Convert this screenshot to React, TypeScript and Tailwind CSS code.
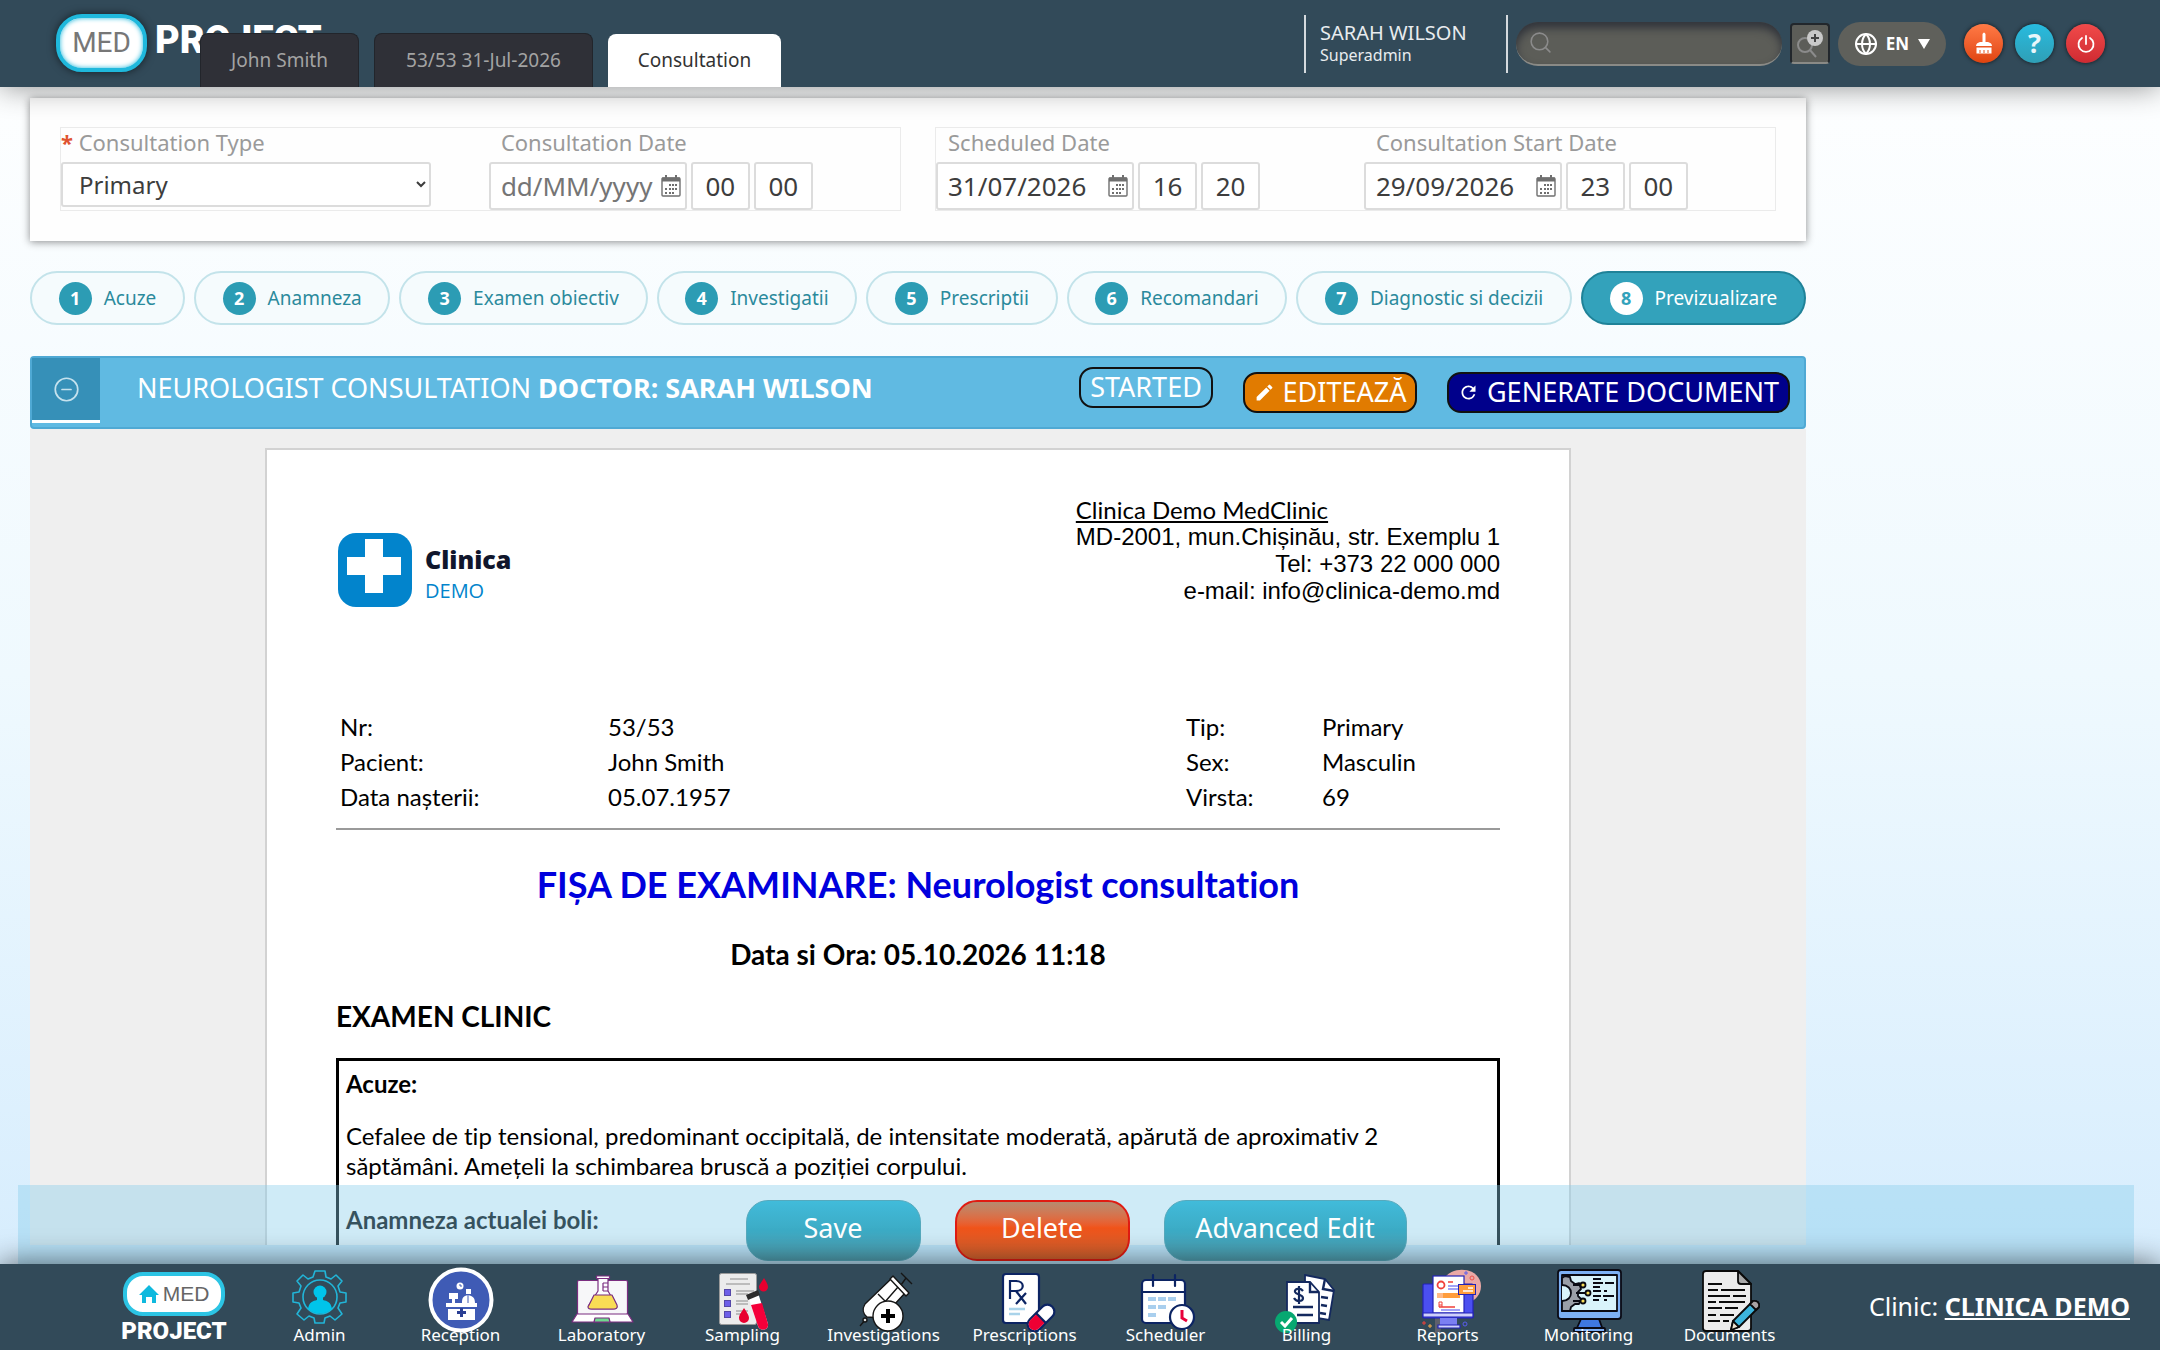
import type { ReactNode } from 'react';
import { CircleMinus, Globe, Search } from 'lucide-react';
import { MdEdit, MdRefresh } from 'react-icons/md';

const steps = [
  'Acuze',
  'Anamneza',
  'Examen obiectiv',
  'Investigatii',
  'Prescriptii',
  'Recomandari',
  'Diagnostic si decizii',
  'Previzualizare',
];

const AdminIcon = () => (
  <svg viewBox="0 0 66 66" className="h-[66px] w-[66px]" fill="none" stroke="#22b5d8" strokeWidth="1.6" strokeLinejoin="round">
    <path d="M28 4h10l1 6 5 2 5-4 6 6-4 5 2 6 6 1v9l-6 1-2 5 4 6-7 6-5-4-5 2-1 5H28l-1-5-5-2-5 4-7-6 4-6-2-5-6-1v-9l6-1 2-6-4-5 6-6 5 4 5-2z" />
    <circle cx="33" cy="30" r="17" />
    <circle cx="33" cy="25" r="6.5" fill="#00c4ea" stroke="none" />
    <path d="M21 42c1-7 5-8 9-9v-4h6v4c4 1 8 2 9 9-7 6-17 6-24 0z" fill="#00c4ea" stroke="none" />
  </svg>
);

const ReceptionIcon = () => (
  <svg viewBox="0 0 66 66" className="h-[66px] w-[66px]">
    <circle cx="33" cy="33" r="30.5" fill="#3f5bb5" stroke="#fff" strokeWidth="4" />
    <g fill="#fff">
      <circle cx="32" cy="19" r="3.5" />
      <path d="M21 26h9v6h-3v4h-3v-4h-3zM38 22h5v5h-5zM34 36c0-5 1-7 6-8 5 1 7 3 7 8z" />
      <path d="M18 36h31v4H18zM20 42h27v11H20z" />
    </g>
    <path d="M32 17v2h2" stroke="#3f5bb5" fill="none" />
    <path d="M32 41h3v3h3v3h-3v3h-3v-3h-3v-3h3z" fill="#2a3f94" />
    <path d="M40 28v8" stroke="#3f5bb5" />
  </svg>
);

const LaboratoryIcon = () => (
  <svg viewBox="0 0 66 66" className="h-[66px] w-[66px]" stroke="#7b2d80" strokeWidth="1.2" strokeLinejoin="round">
    <rect x="8.5" y="13.5" width="50" height="34" rx="1.5" fill="#f7f7f9" />
    <path d="M8 47h51l5 8H3z" fill="#fff" />
    <path d="M25 55l1-4h14l1 4z" fill="#6fd98f" />
    <path d="M29 11v13l-9 14c-1 3 0 4 3 4h21c3 0 5-1 3-4l-8-14V11z" fill="#fdfdff" />
    <path d="M25 28h18l5 10c1 3-1 4-3 4H22c-3 0-4-2-2-4z" fill="#f9dc55" />
    <path d="M27.5 9h13v2.5h-13z" fill="#fff" />
    <path d="M34 16h5M34 20h5M34 24h5M34 16v8" />
  </svg>
);

const SamplingIcon = () => (
  <svg viewBox="0 0 66 66" className="h-[66px] w-[66px]">
    <rect x="9.5" y="6.5" width="37" height="51" rx="2" fill="#ececec" stroke="#9a9a9a" />
    <path d="M20 12h18M16 17h24M26 24h18M26 27h12M26 34h12M26 37h12M26 44h12M26 47h8" stroke="#8c8c8c" strokeWidth="1.2" />
    <g fill="#6d5fe8" stroke="#5548a8">
      <rect x="14.5" y="22.5" width="6" height="6" />
      <rect x="14.5" y="33.5" width="6" height="6" />
      <rect x="14.5" y="44.5" width="6" height="6" />
    </g>
    <path d="M54 11c3 5 4 7 4 9a4 4 0 0 1-9 0c0-2 2-4 5-9zM34 41c4 6 5 8 5 10a5 5 0 0 1-10 0c0-3 2-5 5-10z" fill="#e8002f" />
    <path d="M38 29l10-3 10 31c1 6-8 8-10 2z" fill="#fff" />
    <path d="M41 38l11-2 6 21c1 6-8 8-10 2z" fill="#f5003a" />
    <path d="M36 28l12-5 2 5-12 5z" fill="#2c2c2c" />
  </svg>
);

const InvestigationsIcon = () => (
  <svg viewBox="0 0 66 66" className="h-[66px] w-[66px]" stroke="#151515" strokeWidth="1.4" strokeLinejoin="round">
    <path d="M50 6l11 11M55 11l-5 7M9 59l6-7" />
    <path d="M40 12l14 14-23 25-15-1c-4-3-5-8-2-13z" fill="#fff" />
    <path d="M42 9l-3 3 16 17 3-3z" fill="#fff" />
    <circle cx="14" cy="53" r="2" fill="#ddd" />
    <path d="M27 27l8 8M47 20L33 36" />
    <circle cx="37" cy="49" r="15" fill="#fff" />
    <path d="M37 42v14M30 49h14" stroke="#000" strokeWidth="4" />
  </svg>
);

const PrescriptionsIcon = () => (
  <svg viewBox="0 0 66 66" className="h-[66px] w-[66px]" fill="none" stroke="#0c2463" strokeWidth="2.2">
    <rect x="11" y="7" width="36" height="49" rx="3" fill="#fff" />
    <path d="M18 32V14h6c9 0 9 10 0 10h-6M24 24l10 13M34 26L24 37" />
    <path d="M17 42h16M17 47h11" stroke="#a9d3ea" strokeWidth="2.5" />
    <g transform="rotate(-45 49 51)">
      <rect x="33" y="44" width="32" height="14" rx="7" fill="#fff" />
      <path d="M49 45H40a6 6 0 0 0 0 12h9z" fill="#ee0033" stroke="none" />
      <path d="M49 44v14" />
    </g>
  </svg>
);

const SchedulerIcon = () => (
  <svg viewBox="0 0 66 66" className="h-[66px] w-[66px]" fill="none" stroke="#0c2463" strokeWidth="2.2">
    <rect x="9" y="13" width="43" height="43" rx="4" fill="#fff" />
    <path d="M9 25h43M20 8v11M42 8v11" strokeLinecap="round" />
    <path d="M15 32h8M25 32h8M35 32h8M15 40h8M25 40h8M15 48h8" stroke="#a9cfee" strokeWidth="4" />
    <circle cx="49" cy="50" r="12" fill="#fff" />
    <path d="M49 43v8l5 3" stroke="#e8003a" strokeWidth="3" />
  </svg>
);

const BillingIcon = () => (
  <svg viewBox="0 0 66 66" className="h-[66px] w-[66px]" fill="none" stroke="#14295e" strokeWidth="1.8">
    <path d="M31 8l20 4 9 11-5 30-24-4z" fill="#fff" />
    <path d="M51 12l-2 10 11 2M47 30l7 1M47 38l6 1M46 46l6 1" strokeWidth="2.4" />
    <path d="M13 15h23l9 10v31H13z" fill="#fff" />
    <path d="M36 15v10h9M19 40h20M23 48h16" strokeWidth="2.4" />
    <path d="M29 24c-3-4-9-2-8 1s8 2 8 6-7 4-9 0M25 19v18" strokeWidth="2.2" />
    <circle cx="12" cy="55" r="11" fill="#07a871" stroke="none" />
    <path d="M7 55l4 4 7-8" stroke="#fff" strokeWidth="3" />
  </svg>
);

const ReportsIcon = () => (
  <svg viewBox="0 0 66 66" className="h-[66px] w-[66px]">
    <path d="M20 48l8 4-3 14h-5z" fill="#e3a3a8" opacity=".25" />
    <path d="M31 9c12-12 35-6 35 10 0 9-6 14-12 17z" fill="#eba9a6" />
    <rect x="8" y="17" width="50" height="34" rx="1" fill="#4b4ff0" stroke="#2323b8" strokeWidth="1.2" />
    <rect x="18" y="9" width="31" height="37" fill="#fff" stroke="#2323b8" strokeWidth="1.2" />
    <path d="M8 46h50v4H8z" fill="#cfd0fb" stroke="#2323b8" strokeWidth="1.2" />
    <path d="M25 51h17v9H25z" fill="#7b7ff3" />
    <path d="M23 58h22v3H23z" fill="#cfd0fb" stroke="#2323b8" strokeWidth="1.2" />
    <circle cx="26" cy="18" r="3.5" fill="none" stroke="#f0403a" strokeWidth="1.8" />
    <path d="M33 15h5M24 40h16" stroke="#f0403a" strokeWidth="1.5" />
    <path d="M24 40v-5h3v5M24 38h3" stroke="#f0403a" fill="none" />
    <path d="M33 19h12M33 22h12M26 43h19" stroke="#8587f5" strokeWidth="1.4" />
    <path d="M22 26h23v5H22z" fill="#ffb985" />
    <path d="M28 26h17v5H28z" fill="#ff9d3c" />
    <rect x="43.5" y="17.5" width="17" height="10" fill="#ff9d3c" stroke="#2323b8" />
    <path d="M48 24h10M53 21h5" stroke="#fff" strokeWidth="1.4" />
    <path d="M51 4v4M49 6h4" stroke="#5a5df0" />
    <path d="M9 54v4M7 56h4" stroke="#f0403a" />
    <path d="M15 57v4M13 59h4" stroke="#ffad4a" />
    <circle cx="57" cy="11" r="2" fill="none" stroke="#f0504a" />
    <circle cx="50" cy="57" r="2" fill="none" stroke="#5a5df0" />
  </svg>
);

const MonitoringIcon = () => (
  <svg viewBox="0 0 66 66" className="h-[66px] w-[66px]" stroke="#0a0a14" strokeWidth="1.8" strokeLinejoin="round">
    <path d="M25 52h18l4 11H20z" fill="#3f78e0" />
    <rect x="18" y="61" width="31" height="4" rx="1" fill="#7db0f5" />
    <rect x="2" y="3" width="63" height="49" rx="3" fill="#7db0f5" />
    <rect x="6" y="8" width="55" height="36" fill="#d9f3fb" />
    <path d="M6 11l3-2 5 1 1 4 4 3 4-1 2 6-3 3v4l3 3-2 5-4 0-4 3-1 4H6z" fill="#9a9ea8" />
    <path d="M6 18c6 0 9 4 9 8s-3 8-9 8" fill="#d9f3fb" />
    <path d="M17 18h8M20 26h10M17 34h8" />
    <g fill="#f8dd5a">
      <circle cx="27" cy="18" r="2.5" />
      <circle cx="32" cy="26" r="2.5" />
      <circle cx="27" cy="34" r="2.5" />
    </g>
    <path d="M37 12h8M37 16h10M49 16h9M37 20h7M37 24h8M48 24h3M37 29h8M47 29h11M37 33h6M48 33h3" />
  </svg>
);

const DocumentsIcon = () => (
  <svg viewBox="0 0 66 66" className="h-[66px] w-[66px]" stroke="#0a0a0a" strokeWidth="1.8" strokeLinejoin="round">
    <path d="M9 4h32l13 13v44q0 3-3 3H9q-3 0-3-3V7q0-3 3-3z" fill="#ececec" />
    <path d="M41 4v10q0 3 3 3h10z" fill="#a9a9a9" />
    <path d="M11 17h14M11 23h10M24 23h24M11 29h22M36 29h13M11 35h8M22 35h26M11 41h14M28 41h13M11 48h8M23 48h14M11 54h12M26 54h6" strokeWidth="2" />
    <path d="M34 63l2-9 20-20c4-1 7 2 6 6L42 60z" fill="#3cb4dc" />
    <path d="M56 34c4-1 7 2 6 6l-3 3-6-6z" fill="#a9a3a3" />
    <path d="M34 63l2-9 6 6z" fill="#efe3d0" />
  </svg>
);

const menu: { label: string; icon: ReactNode }[] = [
  { label: 'Admin', icon: <AdminIcon /> },
  { label: 'Reception', icon: <ReceptionIcon /> },
  { label: 'Laboratory', icon: <LaboratoryIcon /> },
  { label: 'Sampling', icon: <SamplingIcon /> },
  { label: 'Investigations', icon: <InvestigationsIcon /> },
  { label: 'Prescriptions', icon: <PrescriptionsIcon /> },
  { label: 'Scheduler', icon: <SchedulerIcon /> },
  { label: 'Billing', icon: <BillingIcon /> },
  { label: 'Reports', icon: <ReportsIcon /> },
  { label: 'Monitoring', icon: <MonitoringIcon /> },
  { label: 'Documents', icon: <DocumentsIcon /> },
];

const CalendarIcon = () => (
  <svg viewBox="0 0 20 22" className="h-[22px] w-5 shrink-0" fill="none" stroke="#6f6f6f" strokeWidth="1.4">
    <rect x="1" y="3" width="18" height="18" rx="1" />
    <path d="M1 4.5h18" strokeWidth="4" />
    <path d="M5 0v5M15 0v5" strokeWidth="2" />
    <path d="M8 10h2M11 10h2M14 10h2M4 14h2M8 14h2M11 14h2M14 14h2M4 18h2M8 18h2M11 18h2" strokeWidth="2" />
  </svg>
);

type DateProps = { id: string; label: string; date?: string; hour: string; minute: string };

const DateField = ({ id, label, date, hour, minute }: DateProps) => (
  <div className="flex flex-col">
    <label htmlFor={id} className="h-[34px] shrink-0 pl-3 text-[22px] leading-7 text-[#9a9a9a]">{label}</label>
    <div className="flex gap-1">
      <div className="flex h-12 w-[198px] items-center rounded-[3px] border-2 border-[#dcdcdc] bg-white pr-1 pl-2.5">
        <input
          id={id}
          defaultValue={date}
          placeholder="dd/MM/yyyy"
          className="min-w-0 flex-1 text-[26px] outline-none placeholder:text-[#757575]"
        />
        <CalendarIcon />
      </div>
      <input aria-label={`${label} hour`} defaultValue={hour} className="h-12 w-[59px] rounded-[3px] border-2 border-[#dcdcdc] bg-white text-center text-[26px]" />
      <input aria-label={`${label} minute`} defaultValue={minute} className="h-12 w-[59px] rounded-[3px] border-2 border-[#dcdcdc] bg-white text-center text-[26px]" />
    </div>
  </div>
);

const Header = () => (
  <header className="relative z-20 flex h-[87px] shrink-0 bg-[#324a59] text-white shadow-[0_0_30px_rgba(0,0,0,0.45)]">
    <a href="#home" aria-label="MED PROJECT" className="relative flex w-[200px] shrink-0 pt-[14px] pl-14">
      <span className="flex h-[58px] w-[91px] shrink-0 items-center justify-center rounded-[26px] border-4 border-[#1fb8dc] bg-white font-['Roboto'] text-[28px] text-[#777] shadow-[0_0_8px_rgba(0,0,0,0.6),inset_0_0_5px_#1fb8dc]">
        MED
      </span>
      <span className="mt-1 ml-2 font-['Roboto'] text-[38px] leading-[44px] font-black">PROJECT</span>
    </a>
    <nav className="relative flex flex-1 items-end gap-[15px]">
      <button className="h-[54px] w-[159px] rounded-t-lg border border-b-0 border-[#22252b] bg-[#2f3037] text-[19px] text-[#a3a3a3]">John Smith</button>
      <button className="h-[54px] w-[219px] rounded-t-lg border border-b-0 border-[#22252b] bg-[#2f3037] text-[19px] text-[#a3a3a3]">53/53 31-Jul-2026</button>
      <button className="h-[53px] w-[173px] rounded-t-lg bg-white text-[19px] text-[#333]">Consultation</button>
    </nav>
    <div className="flex items-center pr-[55px]">
      <div className="mr-2 h-[58px] w-[204px] border-x-2 border-[#d5dade] pt-1.5 pl-3.5">
        <p className="text-[20px] leading-6 text-[#e8ecef]">SARAH WILSON</p>
        <p className="text-[16px] leading-5 text-[#e8ecef]">Superadmin</p>
      </div>
      <label className="flex h-11 w-[266px] items-center rounded-[22px] border-b-2 border-[#8a8a86] bg-[#5c5d58] pl-3 shadow-[inset_0_6px_8px_rgba(20,25,40,0.6)]">
        <Search size={25} strokeWidth={1.5} className="text-[#8b8b8b]" />
        <input aria-label="Search" className="min-w-0 flex-1 px-2 text-[20px] outline-none" />
      </label>
      <button aria-label="Advanced search" className="ml-2 flex h-[41px] w-10 items-center justify-center rounded-sm border-2 border-[#22272c] border-b-[#8a8a86] bg-[#5c5d58]">
        <svg viewBox="0 0 32 32" className="h-8 w-8" fill="none" stroke="#8b8b8b" strokeWidth="2">
          <circle cx="11" cy="17" r="7" />
          <path d="M16 22l6 7" />
          <circle cx="21" cy="10" r="8" fill="#c9c9c9" stroke="none" />
          <path d="M21 6v8M17 10h8" stroke="#444" />
        </svg>
      </button>
      <button className="ml-2 flex h-11 w-[108px] items-center justify-center gap-2 rounded-[22px] bg-[#5f605b] text-[17px] font-bold">
        <Globe size={24} strokeWidth={2} />
        <span>EN</span>
        <svg viewBox="0 0 12 10" className="ml-px h-2.5 w-3" fill="#fff"><path d="M0 0h12L6 10z" /></svg>
      </button>
      <button aria-label="Clear cache" className="ml-[18px] flex h-[39px] w-[39px] items-center justify-center rounded-full bg-linear-to-b from-[#ff7a45] to-[#e0430c] shadow-[0_0_4px_rgba(0,0,0,0.7)]">
        <svg viewBox="0 0 20 24" className="h-6 w-5" fill="#fff">
          <path d="M8.5 2q1.5-3 3 0v8H14q4 1 4 4H2q0-3 4-4h2.500z" />
          <path d="M2 15h16v7H2zM6 18v3M10 18v3M14 18v3" stroke="#e9551f" strokeWidth="1" />
        </svg>
      </button>
      <button aria-label="Help" className="ml-3 flex h-[39px] w-[39px] items-center justify-center rounded-full bg-linear-to-b from-[#27bbdf] to-[#2f9fb6] text-[27px] font-bold text-[#e8f6fa] shadow-[0_0_4px_rgba(0,0,0,0.7)]">?</button>
      <button aria-label="Log out" className="ml-3 flex h-[39px] w-[39px] items-center justify-center rounded-full bg-linear-to-b from-[#f14a4a] to-[#cf2a32] shadow-[0_0_4px_rgba(0,0,0,0.7)]">
        <svg viewBox="0 0 20 20" className="h-5 w-5" fill="none" stroke="#fff" strokeWidth="1.8" strokeLinecap="round">
          <path d="M10 2v8M6 4a7.500 7.500 0 1 0 8 0" />
        </svg>
      </button>
    </div>
  </header>
);

const DatesCard = () => (
  <section className="mt-[11px] grid grid-cols-2 gap-[34px] bg-[#fefefe] px-[30px] pt-[29px] pb-[30px] text-[#3d3d3d] shadow-[0_1px_8px_rgba(0,0,0,0.45)]">
    <div className="flex h-[84px] border border-[#ebebeb]">
      <div className="flex w-[51%] flex-col">
        <label htmlFor="type" className="h-[34px] shrink-0 text-[22px] leading-7 text-[#9a9a9a]">
          <span className="font-bold text-[#e0532f]">* </span>Consultation Type
        </label>
        <select id="type" className="h-[45px] w-[370px] shrink-0 rounded-[3px] border-2 border-[#dcdcdc] bg-white pl-3 text-[24px]">
          <option>Primary</option>
        </select>
      </div>
      <DateField id="cdate" label="Consultation Date" hour="00" minute="00" />
    </div>
    <div className="flex h-[84px] border border-[#ebebeb]">
      <div className="w-[51%]">
        <DateField id="sdate" label="Scheduled Date" date="31/07/2026" hour="16" minute="20" />
      </div>
      <DateField id="start" label="Consultation Start Date" date="29/09/2026" hour="23" minute="00" />
    </div>
  </section>
);

const Steps = () => (
  <nav className="mt-[30px] flex gap-[9px]">
    {steps.map((name, i) => {
      const active = i === steps.length - 1;
      return (
        <button
          key={name}
          className={`flex h-[54px] flex-auto items-center justify-center gap-3 rounded-[27px] border-2 text-[19px] whitespace-nowrap ${
            active ? 'border-[#1f8298] bg-[#33a2bb] text-white' : 'border-[#c3e3ea] bg-[#f5fbfd] text-[#2b8a9c]'
          }`}
        >
          <span
            className={`flex h-[33px] w-[33px] items-center justify-center rounded-full text-[18px] font-bold ${
              active ? 'bg-white text-[#33a2bb]' : 'bg-[#2c9cb4] text-white'
            }`}
          >
            {i + 1}
          </span>
          {name}
        </button>
      );
    })}
  </nav>
);

const PanelBar = () => (
  <div className="mt-[31px] flex h-[73px] shrink-0 items-start rounded border-2 border-[#4fa9d4] bg-[#60bae2] text-white">
    <button aria-label="Collapse" className="flex h-[65px] w-[68px] items-center justify-center border-b-[3px] border-white bg-[#3690b8]">
      <CircleMinus size={27} strokeWidth={1.5} className="text-[#c5e2ee]" />
    </button>
    <h1 className="flex-1 pt-3 pl-[37px] text-[27px] leading-9">
      NEUROLOGIST CONSULTATION <b>DOCTOR: SARAH WILSON</b>
    </h1>
    <div className="flex gap-[30px] pr-3.5 text-[27px]">
      <span className="mt-[9px] flex h-[41px] w-[134px] items-center justify-center rounded-[14px] border-2 border-[#111]">STARTED</span>
      <button className="mt-[14px] flex h-[41px] w-[174px] items-center justify-center gap-2 rounded-[14px] border-2 border-[#111] bg-[#e17b00]">
        <MdEdit size={21} />
        EDITEAZĂ
      </button>
      <button className="mt-[14px] flex h-[41px] w-[343px] items-center justify-center gap-2 rounded-[14px] border-2 border-[#111] bg-[#00008b]">
        <MdRefresh size={21} />
        GENERATE DOCUMENT
      </button>
    </div>
  </div>
);

const rows = [
  ['Nr:', '53/53', 'Tip:', 'Primary'],
  ['Pacient:', 'John Smith', 'Sex:', 'Masculin'],
  ['Data nașterii:', '05.07.1957', 'Virsta:', '69'],
];

const Report = () => (
  <div className="min-h-0 flex-1 overflow-hidden bg-[#efefef] pt-[19px]">
    <article className="mx-auto w-[1306px] border-2 border-[#d2d2d2] bg-white px-[69px] pt-[46px] font-['Lato',sans-serif] text-black [font-variant-ligatures:none]">
      <div className="flex h-[213px] justify-between">
        <div className="mt-[37px] ml-0.5 flex h-[74px] gap-[13px]">
          <svg viewBox="0 0 74 74" className="h-[74px] w-[74px]">
            <rect width="74" height="74" rx="18" fill="#0284cc" />
            <path d="M27 6h18v18h18v18H45v18H27V42H9V24h18z" fill="#fff" />
          </svg>
          <div className="pt-3 font-['Open_Sans']">
            <p className="text-[25px] leading-7 font-extrabold text-[#10162c]">Clinica</p>
            <p className="pt-1 text-[20px] leading-7 font-medium text-[#0284cc]">DEMO</p>
          </div>
        </div>
        <address className="text-right font-['Liberation_Sans'] text-[24px] leading-[27px] not-italic">
          <p className="text-left font-['Lato'] underline">Clinica Demo MedClinic</p>
          <p>MD-2001, mun.Chișinău, str. Exemplu 1</p>
          <p>Tel: +373 22 000 000</p>
          <p>e-mail: info@clinica-demo.md</p>
        </address>
      </div>
      <table className="w-full text-[24px] leading-[35px]">
        <tbody>
          {rows.map(([a, b, c, d]) => (
            <tr key={a}>
              <td className="w-[268px] pl-1">{a}</td>
              <td className="pl-1">{b}</td>
              <td className="w-[136px]">{c}</td>
              <td className="w-[178px]">{d}</td>
            </tr>
          ))}
        </tbody>
      </table>
      <hr className="mt-3.5 border-t-2 border-[#9a9a9a]" />
      <h2 className="mt-[30px] text-center text-[36px] leading-[48px] font-bold text-[#0000dd]">FIȘA DE EXAMINARE: Neurologist consultation</h2>
      <p className="mt-7 text-center text-[28px] leading-9 font-bold">Data si Ora: 05.10.2026 11:18</p>
      <h3 className="mt-[26px] text-[28px] leading-9 font-bold">EXAMEN CLINIC</h3>
      <div className="mt-6 h-[400px] border-[3px] border-black px-[7px] pt-2 text-[24px] leading-[30px]">
        <h4 className="font-bold">Acuze:</h4>
        <p className="mt-[22px] max-w-[1080px]">
          Cefalee de tip tensional, predominant occipitală, de intensitate moderată, apărută de aproximativ 2 săptămâni. Amețeli la schimbarea bruscă a poziției corpului.
        </p>
        <h4 className="mt-6 font-bold">Anamneza actualei boli:</h4>
      </div>
    </article>
  </div>
);

const Actions = () => (
  <div className="absolute inset-x-0 bottom-0 mr-[26px] ml-[18px] flex h-[79px] justify-center gap-[34px] bg-[#87ceeb]/40 pt-[15px] text-[27px] text-white">
    <button className="h-[61px] w-[175px] rounded-[22px] border border-[#55a9bd] bg-linear-to-b from-[#41bbda] via-[#3cabc5] to-[#4f9fb0] pb-1">Save</button>
    <button className="h-[61px] w-[175px] rounded-[22px] border-2 border-[#e01b12] bg-linear-to-b from-[#b58b70] via-[#f0541a] via-45% to-[#d0622f] pb-1">Delete</button>
    <button className="h-[61px] w-[243px] rounded-[22px] border border-[#55a9bd] bg-linear-to-b from-[#41bbda] via-[#3cabc5] to-[#4f9fb0] pb-1">Advanced Edit</button>
  </div>
);

const Footer = () => (
  <footer className="relative z-20 flex h-[86px] shrink-0 items-center bg-[#324a59] pr-[30px] pl-[103px] text-white shadow-[0_0_30px_rgba(0,0,0,0.6)]">
    <a href="#home" className="mr-1 flex w-[142px] flex-col items-center pt-1 font-['Liberation_Sans']">
      <span className="flex h-11 w-[102px] items-center justify-center gap-1 rounded-[20px] border-4 border-[#2cc4e4] bg-white text-[21px] text-[#666]">
        <svg viewBox="0 0 20 18" className="h-[18px] w-5" fill="#0fb9de"><path d="M10 0l10 10h-3v8h-4v-6H7v6H3v-8H0z" /></svg>
        MED
      </span>
      <span className="font-['Roboto'] text-[24px] leading-[30px] font-black">PROJECT</span>
    </a>
    <nav className="flex">
      {menu.map(({ label, icon }) => (
        <a key={label} href={`#${label.toLowerCase()}`} className="flex h-[84px] w-[141px] flex-col items-center pt-0.5 text-[17px]">
          {icon}
          <span className="-mt-2.5 leading-6">{label}</span>
        </a>
      ))}
    </nav>
    <p className="ml-auto text-[25px]">
      Clinic: <a href="#clinic" className="font-bold underline">CLINICA DEMO</a>
    </p>
  </footer>
);

const App = () => {
  return (
    <div className="flex h-screen flex-col overflow-hidden bg-linear-to-b from-white via-[#eff9fe] to-[#d3ebfd] font-['Noto_Sans','Open_Sans',sans-serif]">
      <Header />
      <main className="relative flex min-h-0 flex-1 flex-col pb-[19px]">
        <div className="mr-[354px] ml-[30px] flex min-h-0 flex-1 flex-col">
          <DatesCard />
          <Steps />
          <PanelBar />
          <Report />
        </div>
        <Actions />
      </main>
      <Footer />
    </div>
  );
};

export default App;
